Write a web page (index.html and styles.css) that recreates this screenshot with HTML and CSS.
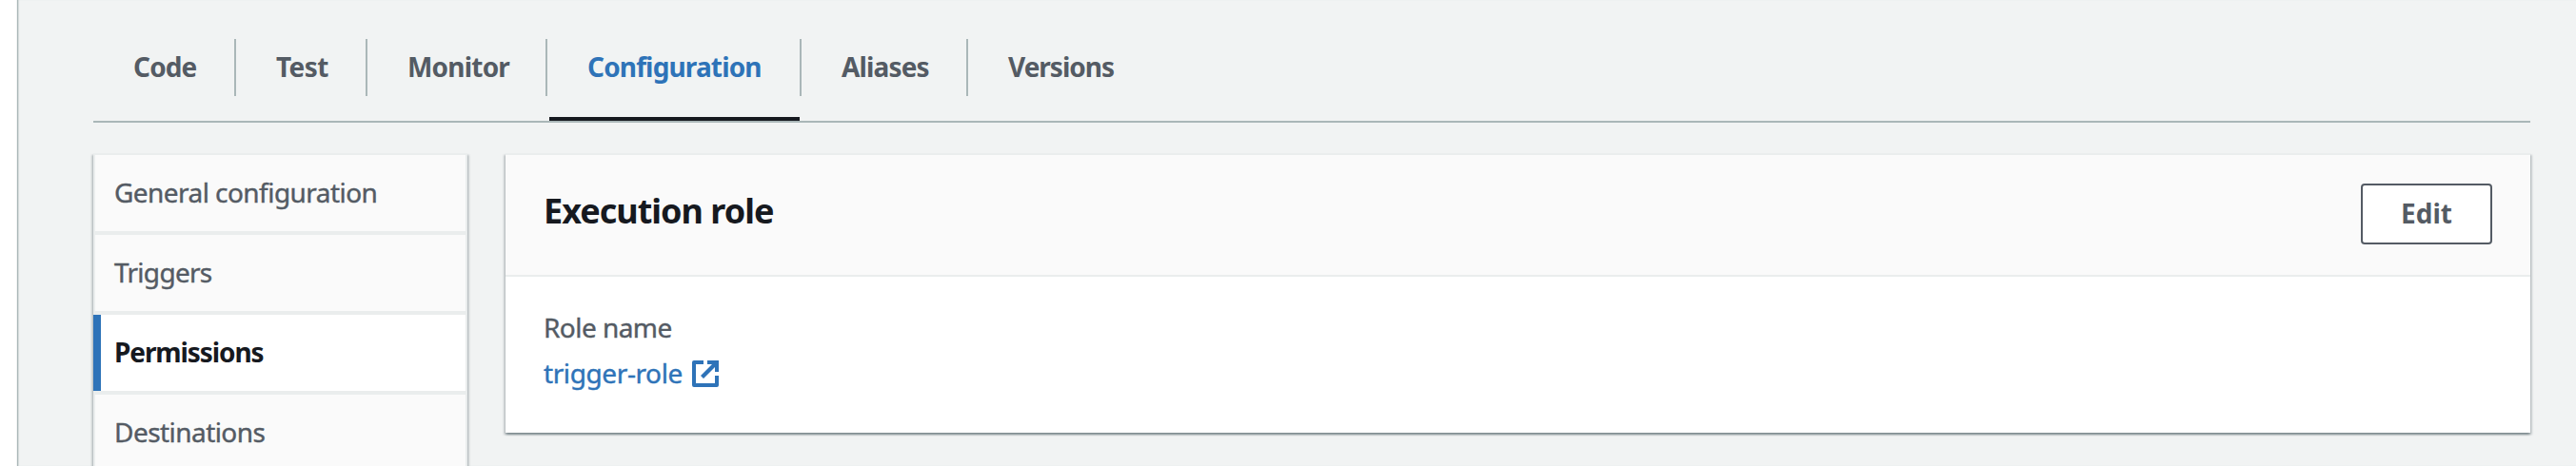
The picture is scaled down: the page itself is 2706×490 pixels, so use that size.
FILE: index.html
```html
<!DOCTYPE html>
<html lang="en">
<head>
<meta charset="utf-8">
<title>Function configuration</title>
<link rel="stylesheet" href="styles.css">
</head>
<body>
<main class="page">
  <nav class="tabs">
    <a class="tab tab-code"><span>Code</span></a>
    <a class="tab tab-test"><span>Test</span></a>
    <a class="tab tab-monitor"><span>Monitor</span></a>
    <a class="tab tab-configuration active"><span>Configuration</span></a>
    <a class="tab tab-aliases"><span>Aliases</span></a>
    <a class="tab tab-versions"><span>Versions</span></a>
  </nav>
  <div class="columns">
    <aside class="sidenav">
      <a class="item item-general">General configuration</a>
      <a class="item item-triggers">Triggers</a>
      <a class="item selected">Permissions</a>
      <a class="item item-destinations">Destinations</a>
    </aside>
    <section class="card">
      <header class="card-header">
        <h2 class="card-title">Execution role</h2>
        <button class="button" type="button">Edit</button>
      </header>
      <div class="card-body">
        <div class="label">Role name</div>
        <a class="link"><span class="link-text">trigger-role</span><svg class="external" viewBox="0 0 28 28"><path d="M12 2H2v24h24V16" fill="none" stroke="currentColor" stroke-width="4" stroke-linejoin="round"/><path d="M16 0h12v12h-4V7L12 19l-3-3L21 4h-5z" fill="currentColor"/></svg></a>
      </div>
    </section>
  </div>
</main>
</body>
</html>
```
FILE: styles.css
```css
* { box-sizing: border-box; }
body {
  margin: 0;
  height: 490px;
  overflow: hidden;
  background: #fff;
  color: #545b64;
  font: 400 28px/44px "Noto Sans", "Open Sans", sans-serif;
  letter-spacing: -.55px;
}
.page {
  margin-left: 19px;
  height: 490px;
  padding: 41px 48px 0 79px;
  background: #f1f3f3;
  box-shadow: -1px 0 1px #aab7b8, inset 1px 0 1px #d5dbdb;
}
.tabs {
  display: flex;
  height: 88px;
  border-bottom: 2px solid #aab7b8;
  font-weight: 700;
  letter-spacing: -.85px;
}
.tab {
  position: relative;
  height: 60px;
  padding: 7px 0 0 42px;
  border-right: 2px solid #aab7b8;
  white-space: nowrap;
}
.tab-code { width: 150px; }
.tab-test { width: 138px; letter-spacing: -.6px; }
.tab-monitor { width: 189px; letter-spacing: -.8px; }
.tab-configuration { width: 267px; }
.tab-aliases { width: 175px; }
.tab-versions { border-right: 0; letter-spacing: -1px; }
.tab.active { color: #2e73b8; }
.tab.active::after {
  content: "";
  position: absolute;
  left: 2px;
  right: 0;
  top: 82px;
  height: 4px;
  background: #16191f;
}
.columns {
  display: flex;
  align-items: flex-start;
  gap: 40px;
  margin-top: 33px;
}
.sidenav, .card {
  box-shadow: 0 2px 2px rgba(0, 28, 36, .3), 2px 2px 2px rgba(0, 28, 36, .15), -2px 2px 2px rgba(0, 28, 36, .15);
}
.sidenav {
  display: flex;
  flex-direction: column;
  gap: 4px;
  width: 393px;
  height: 329px;
  margin-top: -1px;
  padding: 2px 2px 0;
  background: #eaeded;
}
.item {
  height: 80px;
  padding: 17px 0 0 20px;
  background: #fafafa;
  white-space: nowrap;
}
.item-general, .item-triggers, .item-destinations, .label, .link-text {
  -webkit-text-stroke: .4px currentColor;
}
.item-triggers { letter-spacing: -.7px; }
.item-destinations { height: 75px; }
.item.selected {
  margin-left: -2px;
  padding-left: 14px;
  border-left: 8px solid #2e73b8;
  background: #fff;
  color: #16191f;
  font-weight: 700;
  letter-spacing: -1.1px;
}
.card {
  flex: 1;
  height: 294px;
  margin-top: -1px;
  border-top: 2px solid #eaeded;
  background: #fff;
}
.card-header {
  display: flex;
  justify-content: space-between;
  align-items: flex-start;
  height: 128px;
  padding: 30px 40px 0 40px;
  border-bottom: 2px solid #eaeded;
  background: #fafafa;
}
.card-title {
  margin: 3px 0 0;
  color: #16191f;
  font-size: 36px;
  line-height: 52px;
  letter-spacing: -1px;
}
.button {
  width: 138px;
  height: 64px;
  padding: 0 0 2px;
  border: 2px solid #545b64;
  border-radius: 4px;
  background: #fff;
  color: #545b64;
  font: 700 28px/56px "Noto Sans", "Open Sans", sans-serif;
}
.card-body {
  display: flex;
  flex-direction: column;
  align-items: flex-start;
  gap: 4px;
  padding: 31px 40px 0;
}
.link {
  display: flex;
  align-items: center;
  color: #2e73b8;
}
.link-text { width: 156px; letter-spacing: -.4px; white-space: nowrap; }
.external { width: 28px; height: 28px; margin-top: 2px; }
```
